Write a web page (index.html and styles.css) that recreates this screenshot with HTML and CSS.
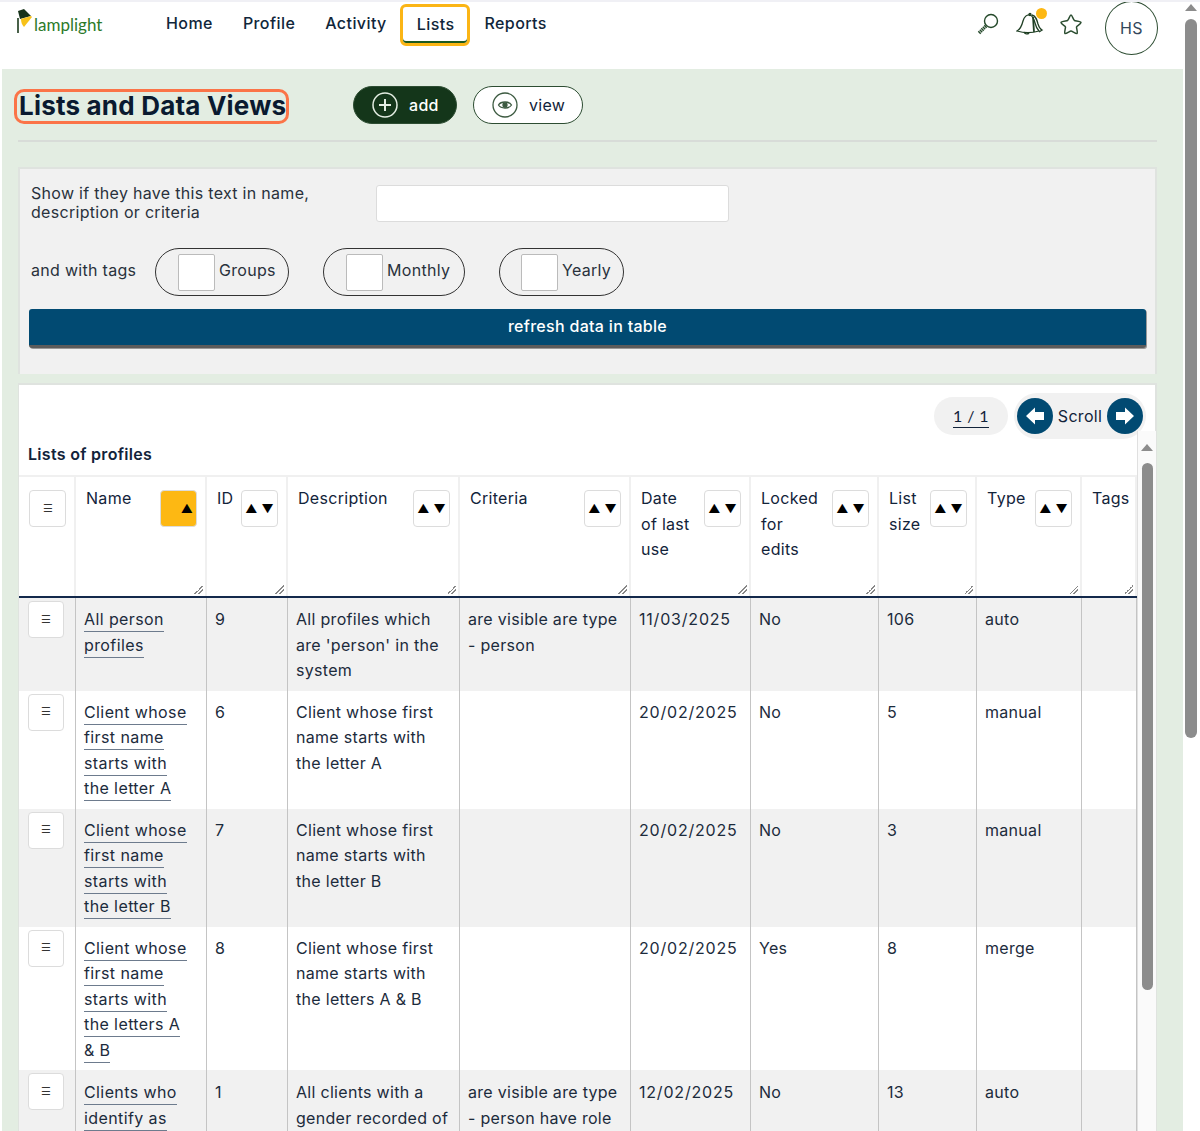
FILE: index.html
```html
<!DOCTYPE html>
<html lang="en">
<head>
<meta charset="utf-8">
<title>Lists and Data Views</title>
<link rel="stylesheet" href="styles.css">
</head>
<body>
<div class="page">
<div class="main">

<header class="topbar">
  <a class="logo">
    <svg width="18" height="26" viewBox="0 0 18 26"><path d="M2 9 L2 24" stroke="#1c3a1c" stroke-width="1.600" fill="none"/><path d="M2 2 L8 0 L15 7 L4 10 Z" fill="#17331a"/><path d="M5 10 L15 7 L16 8 L8 18 C6 16 5 13 5 10 Z" fill="#f7c21a"/></svg>
    <span>lamplight</span>
  </a>
  <nav class="nav">
    <a>Home</a>
    <a>Profile</a>
    <a>Activity</a>
    <a class="active">Lists</a>
    <a>Reports</a>
  </nav>
  <div class="tools">
    <svg width="24" height="24" viewBox="0 0 24 24" fill="none" stroke="#24492a" stroke-width="1.400"><circle cx="15" cy="9" r="6.500"/><path d="M10 14 L3 21" stroke-width="3.400" stroke-dasharray="1.500 .6"/></svg>
    <div class="bell">
      <svg width="28" height="24" viewBox="0 0 28 24" fill="none" stroke="#1f3f24" stroke-width="1.300"><path d="M1 19 C5 17 6 13 7 9 C8 5 11 2 14 3 C17 4 18 7 19 11 C20 15 21 17 23 19 C16 21 8 21 1 19 Z"/><path d="M16 3 C20 4 21 8 22 12 C23 15 24 17 26 18 L23 20"/><path d="M17 5 L18 20" stroke-width="1.800"/><path d="M8 20 A3 3 0 0 0 13 21"/><circle cx="14" cy="2.500" r="1"/></svg>
      <span class="dot"></span>
    </div>
    <svg class="star" width="24" height="24" viewBox="0 0 24 24" fill="none" stroke="#2b4d30" stroke-width="1.500" stroke-linejoin="round"><path d="M12 3 C13 3 14.500 8 15.500 8.500 C16.500 9 22 9 22 10.500 C22 12 18 14 17.500 15 C17.500 16.500 19 21 18 21.500 C17 22 13 19 12 19 C11 19 7 22 6 21.500 C5 21 6.500 16.500 6.500 15 C6 14 2 12 2 10.500 C2 9 7.500 9 8.500 8.500 C9.500 8 11 3 12 3 Z"/></svg>
    <div class="avatar">HS</div>
  </div>
</header>

<section class="content">
  <div class="title-row">
    <h1>Lists and Data Views</h1>
    <a class="pill dark">
      <svg width="26" height="26" viewBox="0 0 26 26" fill="none" stroke="#e3ede2" stroke-width="1.500"><circle cx="13" cy="13" r="12"/><path d="M13 7 V19 M7 13 H19" stroke-width="2"/></svg>
      add
    </a>
    <a class="pill light">
      <svg width="26" height="26" viewBox="0 0 26 26" fill="none" stroke="#3c5a40" stroke-width="1.300"><circle cx="13" cy="13" r="12"/><path d="M6.500 13 C9 9 17 9 19.500 13 C17 17 9 17 6.500 13 Z"/><circle cx="13" cy="13" r="2" fill="#3c5a40"/></svg>
      view
    </a>
  </div>

  <form class="filters">
    <div class="filter-top">
      <label class="search-label">Show if they have this text in name, description or criteria</label>
      <div class="search-box"></div>
    </div>
    <div class="filter-tags">
      <span class="tags-label">and with tags</span>
      <div class="tag tag-groups"><i class="box"></i><span>Groups</span></div>
      <div class="tag tag-monthly"><i class="box"></i><span>Monthly</span></div>
      <div class="tag tag-yearly"><i class="box"></i><span>Yearly</span></div>
    </div>
    <div class="refresh">refresh data in table</div>
  </form>

  <section class="panel">
    <div class="pager-row">
      <div class="pages"><u>1 / 1</u></div>
      <div class="scroller">
        <span class="round"><svg width="22" height="22" viewBox="0 0 22 22"><path d="M2 11 L11 2.500 V7 H20 V15 H11 V19.500 Z" fill="#fff"/></svg></span>
        Scroll
        <span class="round"><svg width="22" height="22" viewBox="0 0 22 22"><path d="M20 11 L11 2.500 V7 H2 V15 H11 V19.500 Z" fill="#fff"/></svg></span>
      </div>
    </div>
    <h2 class="table-title">Lists of profiles</h2>

    <div class="table-wrap">
      <table class="grid">
        <colgroup>
          <col class="c0"><col class="c1"><col class="c2"><col class="c3"><col class="c4"><col class="c5"><col class="c6"><col class="c7"><col class="c8"><col class="c9">
        </colgroup>
        <thead>
          <tr>
            <th><span class="sort menu">&#9776;</span></th>
            <th><div class="th"><span>Name</span><span class="sort on"><b>&#9650;</b></span></div></th>
            <th><div class="th"><span>ID</span><span class="sort"><b>&#9650;</b><b>&#9660;</b></span></div></th>
            <th><div class="th"><span>Description</span><span class="sort"><b>&#9650;</b><b>&#9660;</b></span></div></th>
            <th><div class="th"><span>Criteria</span><span class="sort"><b>&#9650;</b><b>&#9660;</b></span></div></th>
            <th><div class="th"><span>Date<br>of last<br>use</span><span class="sort"><b>&#9650;</b><b>&#9660;</b></span></div></th>
            <th><div class="th"><span>Locked<br>for<br>edits</span><span class="sort"><b>&#9650;</b><b>&#9660;</b></span></div></th>
            <th><div class="th"><span>List<br>size</span><span class="sort"><b>&#9650;</b><b>&#9660;</b></span></div></th>
            <th><div class="th"><span>Type</span><span class="sort"><b>&#9650;</b><b>&#9660;</b></span></div></th>
            <th><div class="th"><span>Tags</span></div></th>
          </tr>
        </thead>
        <tbody>
          <tr>
            <td><span class="sort menu row">&#9776;</span></td>
            <td class="name"><a>All person profiles</a></td><td>9</td>
            <td>All profiles which are 'person' in the system</td>
            <td>are visible are type - person</td>
            <td class="date">11/03/2025</td><td>No</td><td>106</td><td>auto</td><td></td>
          </tr>
          <tr>
            <td><span class="sort menu row">&#9776;</span></td>
            <td class="name"><a>Client whose first name starts with the letter A</a></td><td>6</td>
            <td>Client whose first name starts with the letter A</td>
            <td></td>
            <td class="date">20/02/2025</td><td>No</td><td>5</td><td>manual</td><td></td>
          </tr>
          <tr>
            <td><span class="sort menu row">&#9776;</span></td>
            <td class="name"><a>Client whose first name starts with the letter B</a></td><td>7</td>
            <td>Client whose first name starts with the letter B</td>
            <td></td>
            <td class="date">20/02/2025</td><td>No</td><td>3</td><td>manual</td><td></td>
          </tr>
          <tr>
            <td><span class="sort menu row">&#9776;</span></td>
            <td class="name"><a>Client whose first name starts with the letters A &amp; B</a></td><td>8</td>
            <td>Client whose first name starts with the letters A &amp; B</td>
            <td></td>
            <td class="date">20/02/2025</td><td>Yes</td><td>8</td><td>merge</td><td></td>
          </tr>
          <tr>
            <td><span class="sort menu row">&#9776;</span></td>
            <td class="name"><a>Clients who identify as female</a></td><td>1</td>
            <td>All clients with a gender recorded of female</td>
            <td>are visible are type - person have role client</td>
            <td class="date">12/02/2025</td><td>No</td><td>13</td><td>auto</td><td></td>
          </tr>
        </tbody>
      </table>
      <div class="inner-scroll"><span class="arrow"></span><span class="thumb"></span></div>
    </div>
  </section>
</section>

</div>
<aside class="page-scroll"><span class="arrow"></span><span class="thumb"></span></aside>
</div>
</body>
</html>
```

FILE: styles.css
```css
* { box-sizing: border-box; }

html, body {
  margin: 0;
  height: 100%;
  overflow: hidden;
}

body {
  font-family: "Inter", "Open Sans", sans-serif;
  font-size: 16px;
  letter-spacing: .3px;
  color: #12233a;
  background: #fff;
}

.page {
  display: flex;
  height: 1131px;
  overflow: hidden;
  border-top: 2px solid #f0f0f5;
  padding-left: 2px;
}

.main {
  width: 1181px;
  flex: none;
}

/* top bar */
.topbar {
  height: 67px;
  display: flex;
  align-items: flex-start;
  background: #fff;
  position: relative;
}

.logo {
  display: flex;
  align-items: flex-start;
  width: 164px;
  padding: 7px 0 0 14px;
  color: #2c7a2a;
  font-family: "Lato", sans-serif;
  font-size: 17px;
  letter-spacing: 0;
}

.logo span { margin: 5px 0 0 0; }

.nav {
  display: flex;
  gap: 30px;
  padding-top: 11px;
  font-size: 16px;
  font-weight: 500;
  letter-spacing: .42px;
  color: #10263a;
}

.nav a { line-height: 20px; }

.nav .active {
  margin: -9px -16px 0 -17px;
  padding: 7px 13px 0 14px;
  height: 42px;
  border: 3px solid #fbb515;
  border-radius: 6px;
  box-shadow: inset 0 -2px 0 #1c5a20;
}

.tools {
  margin-left: auto;
  display: flex;
  align-items: flex-start;
  padding: 10px 25px 0 0;
}

.tools .star { margin: 0 0 0 15px; }

.bell {
  position: relative;
  margin-left: 16px;
}

.dot {
  position: absolute;
  top: -4px;
  right: -3px;
  width: 11px;
  height: 11px;
  border-radius: 50%;
  background: #fdb813;
}

.avatar {
  width: 53px;
  height: 54px;
  margin: -11px 0 0 22px;
  border: 1.500px solid #2d4d32;
  border-radius: 50%;
  display: flex;
  align-items: center;
  justify-content: center;
  font-size: 16px;
  color: #33475b;
}

/* main area */
.content {
  background: #e3ede2;
  padding: 0 26px 0 16px;
  height: 1062px;
  overflow: hidden;
}

.title-row {
  height: 73px;
  padding-top: 1px;
  display: flex;
  align-items: center;
  border-bottom: 2px solid #d8dcd8;
}

h1 {
  margin: 2px 64px 0 -4px;
  width: 275px;
  height: 35px;
  border: 3px solid #fb7448;
  border-radius: 10px;
  font-size: 26px;
  letter-spacing: .2px;
  line-height: 28px;
  font-weight: 700;
  color: #0a1a30;
  white-space: nowrap;
  padding-left: 2px;
}

.pill {
  display: flex;
  align-items: center;
  height: 38px;
  border-radius: 19px;
  font-size: 16px;
  border: 1px solid #2d4d32;
}

.pill svg { margin-right: 11px; }

.dark {
  width: 104px;
  padding-left: 18px;
  background: #14361a;
  color: #fff;
  font-weight: 500;
}

.light {
  width: 110px;
  margin-left: 16px;
  padding-left: 18px;
  background: #fff;
  color: #12233a;
}

.filters {
  margin-top: 25px;
  width: 1139px;
  height: 207px;
  background: #f1f1f1;
  border: 2px solid #dfe3df;
  border-bottom: 0;
  padding: 15px 9px 0 11px;
  color: #29313c;
}

.filter-top {
  display: flex;
  gap: 45px;
}

.search-label {
  width: 300px;
  line-height: 19px;
}

.search-box {
  width: 353px;
  height: 37px;
  margin-top: 1px;
  background: #fff;
  border: 1px solid #dcdcdc;
  border-radius: 3px;
}

.filter-tags {
  display: flex;
  align-items: center;
  margin-top: 26px;
  height: 48px;
}

.tags-label {
  width: 124px;
  margin-top: -4px;
}

.tag {
  display: flex;
  align-items: center;
  height: 48px;
  border: 1.500px solid #333;
  border-radius: 24px;
}

.tag span { margin-top: -4px; }

.tag-groups { width: 134px; padding-left: 22px; }
.tag-monthly { width: 142px; margin-left: 34px; padding-left: 22px; }
.tag-yearly { width: 125px; margin-left: 34px; padding-left: 21px; }

.box {
  width: 37px;
  height: 37px;
  margin-right: 4px;
  background: #fff;
  border: 1px solid #bbb;
  border-radius: 2px;
  flex: none;
}

.refresh {
  margin: 13px 0 0 -2px;
  height: 39px;
  background: #014a72;
  border-radius: 3px;
  border-bottom: 3px solid #5c5c5c;
  box-shadow: 1px 1px 0 #999;
  color: #fff;
  text-align: center;
  font-weight: 500;
  line-height: 35px;
}

.panel {
  margin-top: 9px;
  width: 1139px;
  height: 760px;
  background: #fff;
  border: 2px solid #dfe3df;
  border-width: 2px 2px 0 1px;
}

.pager-row {
  display: flex;
  justify-content: flex-end;
  align-items: center;
  height: 52px;
  padding: 9px 9px 0 0;
}

.pages {
  width: 74px;
  height: 38px;
  margin-right: 6px;
  border-radius: 19px;
  background: #f1f1f1;
  text-align: center;
  line-height: 38px;
  font-family: "Lato", sans-serif;
  font-size: 16px;
  letter-spacing: .4px;
}

.pages u { text-underline-offset: 5px; }

.scroller {
  display: flex;
  align-items: center;
  justify-content: space-between;
  width: 132px;
  height: 46px;
  padding: 0 3px;
  border-radius: 23px;
  background: #f1f1f1;
}

.round {
  display: flex;
  align-items: center;
  justify-content: center;
  width: 36px;
  height: 36px;
  border-radius: 50%;
  background: #014a72;
}

.table-title {
  margin: 0;
  padding: 5px 0 0 9px;
  height: 38px;
  font-size: 16px;
  font-weight: 600;
  line-height: 24px;
}

.table-wrap {
  position: relative;
  width: 1136px;
}

.grid {
  table-layout: fixed;
  border-collapse: collapse;
  width: 1117px;
}

.c0 { width: 56px; }
.c1 { width: 131px; }
.c2 { width: 81px; }
.c3 { width: 172px; }
.c4 { width: 171px; }
.c5 { width: 120px; }
.c6 { width: 128px; }
.c7 { width: 98px; }
.c8 { width: 105px; }
.c9 { width: 55px; }

.grid th {
  height: 121px;
  vertical-align: top;
  text-align: left;
  font-weight: 400;
  padding: 9px 8px 0 10px;
  border-right: 2px solid #f0f0f0;
  border-top: 2px solid #f0f0f0;
  border-bottom: 2px solid #13294b;
  line-height: 25.500px;
  position: relative;
}

.grid th:not(:first-child)::after {
  content: "";
  position: absolute;
  right: 2px;
  bottom: 2px;
  width: 9px;
  height: 9px;
  background: linear-gradient(135deg, transparent 50%, #888 50%, #888 58%, transparent 58%, transparent 72%, #888 72%, #888 80%, transparent 80%);
}

.grid th:first-child { padding-top: 13px; }

.th {
  display: flex;
  justify-content: space-between;
  align-items: flex-start;
  gap: 6px;
}

.sort {
  flex: none;
  width: 37px;
  height: 37px;
  display: inline-flex;
  align-items: center;
  justify-content: center;
  gap: 4px;
  background: #fff;
  border: 1px solid #dcdcdc;
  border-radius: 4px;
  color: #000;
  font-size: 12px;
  letter-spacing: 0;
}

.th .sort { margin-top: 4px; }

.sort b { font-weight: 400; line-height: 1; }

.sort.on {
  background: #fdb813;
  justify-content: flex-end;
  padding-right: 3px;
}

.sort.menu { font-size: 11px; color: #333; }

.sort.row { width: 36px; height: 37px; }

.grid td {
  vertical-align: top;
  padding: 9px 4px 7px 8.500px;
  line-height: 25.500px;
  border-right: 1px solid #c4c4c4;
  color: #1c2b3c;
}

.grid td:first-child { padding-top: 3px; }

.grid td.name { padding-right: 12px; }

.grid td.date {
  padding-right: 0;
  letter-spacing: .8px;
}

.grid tbody tr:nth-child(odd) td { background: #f1f1f1; }

.grid tbody tr:last-child td:not(:first-child) { padding-top: 10px; }

.grid td a {
  letter-spacing: .4px;
  text-decoration: none;
  border-bottom: 1px solid #6d7b8d;
  padding-bottom: 2px;
}

.inner-scroll {
  position: absolute;
  top: -44px;
  left: 1118px;
  width: 19px;
  height: 800px;
  background: #fafafa;
  border-left: 1px solid #e0e0e0;
}

.inner-scroll .arrow,
.page-scroll .arrow {
  position: absolute;
  top: 13px;
  left: 3px;
  border: 6px solid transparent;
  border-top: 0;
  border-bottom: 7px solid #8c8c8c;
}

.inner-scroll .thumb {
  position: absolute;
  top: 32px;
  left: 4px;
  width: 11px;
  height: 527px;
  border-radius: 6px;
  background: #8c8c8c;
}

.page-scroll {
  position: relative;
  flex: 1;
  background: #fff;
}

.page-scroll .arrow { top: 2px; left: 2px; }

.page-scroll .thumb {
  position: absolute;
  top: 17px;
  left: 2px;
  width: 12px;
  height: 719px;
  border-radius: 6px;
  background: #8c8c8c;
}
```
